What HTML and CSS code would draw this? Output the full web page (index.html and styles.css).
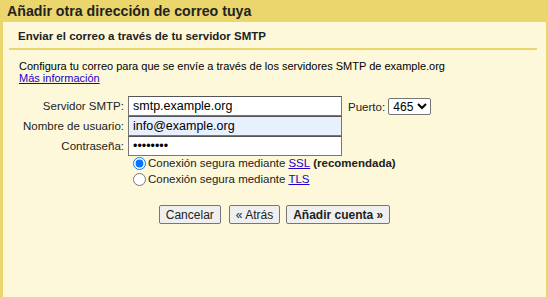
FILE: index.html
```html
<!DOCTYPE html>
<html lang="es">
<head>
  <meta charset="UTF-8">
  <meta name="viewport" content="width=device-width, initial-scale=1.0">
  <title>Añadir otra dirección de correo tuya</title>
  <link rel="stylesheet" href="styles.css">
</head>
<body>
  <div class="title">Añadir otra dirección de correo tuya</div>
  <div class="panel">
    <div class="section-head">Enviar el correo a través de tu servidor SMTP</div>
    <div class="content">
      <p class="intro">Configura tu correo para que se envíe a través de los servidores SMTP de example.org<br>
        <a href="#">Más información</a></p>

      <div class="form">
        <label class="label" for="server">Servidor SMTP:</label>
        <input class="field" type="text" id="server" value="smtp.example.org">
        <div class="port">
          <label for="port">Puerto:</label>
          <select id="port" class="port-select">
            <option>465</option>
            <option>587</option>
            <option>25</option>
          </select>
        </div>

        <label class="label" for="user">Nombre de usuario:</label>
        <input class="field filled" type="text" id="user" value="info@example.org">
        <div></div>

        <label class="label" for="pass">Contraseña:</label>
        <input class="field" type="password" id="pass" value="password">
        <div></div>

        <div></div>
        <div class="radios">
          <label class="radio"><input type="radio" name="sec" checked> Conexión segura mediante <a href="#">SSL</a> <b>(recomendada)</b></label>
          <label class="radio"><input type="radio" name="sec"> Conexión segura mediante <a href="#">TLS</a></label>
        </div>
      </div>

      <div class="actions">
        <button class="btn">Cancelar</button>
        <button class="btn back">« Atrás</button>
        <button class="btn primary">Añadir cuenta »</button>
      </div>
    </div>
  </div>
</body>
</html>
```

FILE: styles.css
```css
* {
  box-sizing: border-box;
}

html, body {
  height: 100%;
}

body {
  margin: 0;
  background-color: #ead66c;
  font-family: Arial, "Liberation Sans", sans-serif;
  font-size: 11.5px;
  color: #000;
  overflow: hidden;
}

.title {
  height: 22px;
  line-height: 22px;
  padding-left: 7px;
  font-size: 14.2px;
  font-weight: bold;
  color: #222;
}

.panel {
  margin: 0 2px 0 3px;
  height: calc(100% - 22px);
  background-color: #fdf8d9;
}

.section-head {
  margin: 0 9px 0 6px;
  padding-left: 9px;
  height: 28px;
  line-height: 28px;
  font-size: 11.5px;
  font-weight: bold;
  border-bottom: 2px solid #ead66c;
  color: #222;
}

.content {
  padding: 10px 0 0 16px;
}

.intro {
  margin: 0;
  font-size: 11px;
  line-height: 12px;
}

a {
  color: #2200cc;
}

.form {
  margin-top: 12px;
  display: grid;
  grid-template-columns: 107px 216px auto;
  align-items: center;
}

.label {
  text-align: right;
  padding-right: 2px;
  white-space: nowrap;
  color: #222;
}

.field {
  width: 214px;
  height: 20px;
  margin: 0 0 0 2px;
  padding: 0 4px;
  font-family: inherit;
  font-size: 12.5px;
  border: 1px solid #767676;
  border-top-color: #555;
  background: #fff;
}

.field.filled {
  background-color: #e8f0fe;
}

.port {
  padding-left: 6px;
  white-space: nowrap;
  color: #222;
}

.port-select {
  font-family: inherit;
  font-size: 12px;
  height: 17px;
  padding: 0;
  border: 1px solid #767676;
  border-radius: 2px;
  background: #fff;
}

.radios {
  grid-column: 2 / 4;
  margin-top: -1px;
  padding-left: 6px;
  display: flex;
  flex-direction: column;
}

.radio {
  display: flex;
  align-items: center;
  height: 16px;
  white-space: nowrap;
  color: #222;
}

.radio input {
  margin: 0 2px 0 1px;
  width: 13px;
  height: 13px;
}

.radio a {
  margin: 0 3px;
}

.actions {
  margin-top: 18px;
  display: flex;
  justify-content: center;
  padding-right: 16px;
}

.btn {
  font-family: inherit;
  font-size: 12px;
  height: 19px;
  padding: 0 6px;
  margin: 0 3px;
  background-color: #efefef;
  border: 1px solid #767676;
  border-radius: 2px;
  color: #222;
}

.btn.back {
  margin-left: 5px;
}

.btn.primary {
  font-weight: bold;
}
```
